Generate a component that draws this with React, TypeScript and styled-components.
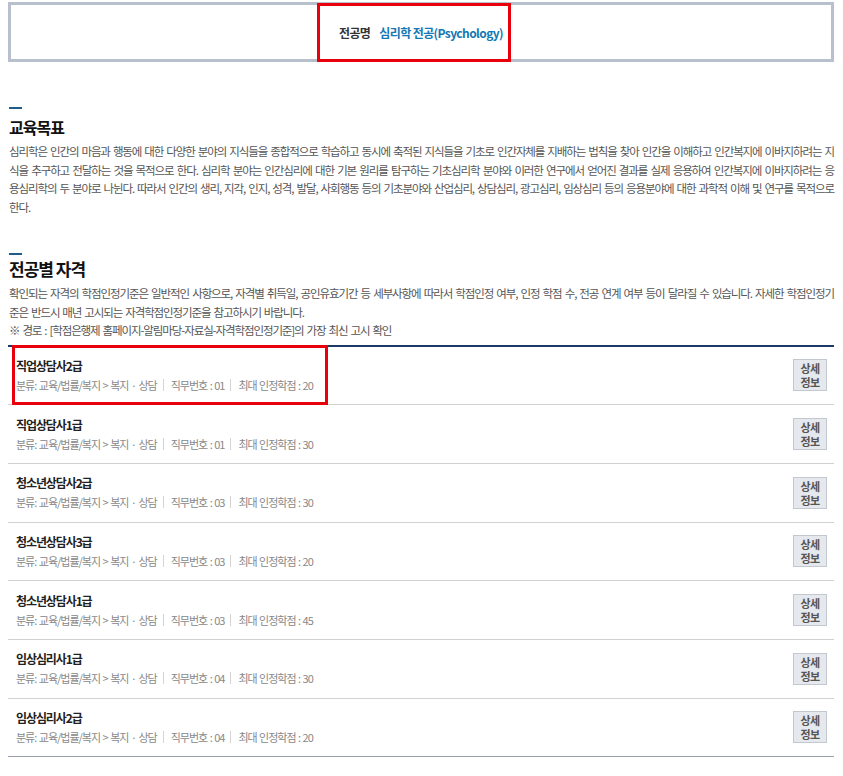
import React from "react";
import styled, { createGlobalStyle } from "styled-components";

const GlobalStyle = createGlobalStyle`
  body {
    margin: 0;
    background: #fff;
    font-family: "Noto Sans CJK KR", "Noto Sans", sans-serif;
  }
`;

const items = [
  { name: "직업상담사2급", no: "01", credit: 20, marked: true },
  { name: "직업상담사1급", no: "01", credit: 30 },
  { name: "청소년상담사2급", no: "03", credit: 30 },
  { name: "청소년상담사3급", no: "03", credit: 20 },
  { name: "청소년상담사1급", no: "03", credit: 45 },
  { name: "임상심리사1급", no: "04", credit: 30 },
  { name: "임상심리사2급", no: "04", credit: 20 },
];

const App = () => {
  return (
    <Page>
      <GlobalStyle />
      <MajorBox>
        <MajorLabel>전공명</MajorLabel>
        <MajorName>심리학 전공(Psychology)</MajorName>
        <Highlight $left={306} $top={-2} $width={194} $height={59} />
      </MajorBox>

      <Section $top={45}>
        <Marker />
        <Heading $gap={7}>교육목표</Heading>
        <Text>
          심리학은 인간의 마음과 행동에 대한 다양한 분야의 지식들을 종합적으로 학습하고 동시에 축적된 지식들을 기초로 인간자체를 지배하는 법칙을 찾아 인간을 이해하고 인간복지에 이바지하려는 지식을 추구하고 전달하는 것을 목적으로 한다. 심리학 분야는 인간심리에 대한 기본 원리를 탐구하는 기초심리학 분야와 이러한 연구에서 얻어진 결과를 실제 응용하여 인간복지에 이바지하려는 응용심리학의 두 분야로 나뉜다. 따라서 인간의 생리, 지각, 인지, 성격, 발달, 사회행동 등의 기초분야와 산업심리, 상담심리, 광고심리, 임상심리 등의 응용분야에 대한 과학적 이해 및 연구를 목적으로 한다.
        </Text>
      </Section>

      <Section $top={37}>
        <Marker />
        <Heading $size={17} $gap={3}>전공별 자격</Heading>
        <Text>
          확인되는 자격의 학점인정기준은 일반적인 사항으로, 자격별 취득일, 공인유효기간 등 세부사항에 따라서 학점인정 여부, 인정 학점 수, 전공 연계 여부 등이 달라질 수 있습니다. 자세한 학점인정기준은 반드시 매년 고시되는 자격학점인정기준을 참고하시기 바랍니다.
          <br />※ 경로 : [학점은행제 홈페이지-알림마당-자료실-자격학점인정기준]의 가장 최신 고시 확인
        </Text>
      </Section>

      <List>
        {items.map((it, i) => (
          <Item key={it.name} $last={i === items.length - 1}>
            <Info>
              <ItemName>{it.name}</ItemName>
              <Meta>
                <span>분류: 교육/법률/복지 &gt; 복지 · 상담</span>
                <Bar />
                <span>직무번호 : {it.no}</span>
                <Bar />
                <span>최대 인정학점 : {it.credit}</span>
              </Meta>
            </Info>
            <DetailButton>
              상세
              <br />
              정보
            </DetailButton>
            {it.marked && <Highlight $left={4} $top={-2} $width={316} $height={60} />}
          </Item>
        ))}
      </List>
    </Page>
  );
};

export default App;

const Page = styled.div`
  padding: 2px 9px 20px 8px;
  color: #555;
`;

const MajorBox = styled.div`
  position: relative;
  height: 54px;
  border: 3px solid #b9c0cd;
  display: flex;
  align-items: center;
  justify-content: center;
  gap: 9px;
  font-size: 12px;
  font-weight: 700;
  letter-spacing: -0.6px;
`;

const MajorLabel = styled.span`
  color: #333;
`;

const MajorName = styled.span`
  color: #1578b4;
`;

const Highlight = styled.div<{ $left: number; $top: number; $width: number; $height: number }>`
  position: absolute;
  left: ${(p) => p.$left}px;
  top: ${(p) => p.$top}px;
  width: ${(p) => p.$width}px;
  height: ${(p) => p.$height}px;
  border: 3px solid #e8000c;
  box-sizing: border-box;
  pointer-events: none;
`;

const Section = styled.section<{ $top: number }>`
  margin-top: ${(p) => p.$top}px;
  padding-left: 1px;
`;

const Marker = styled.div`
  width: 13px;
  height: 2px;
  background: #1d5d8c;
`;

const Heading = styled.h2<{ $size?: number; $gap: number }>`
  margin: ${(p) => p.$gap}px 0 4px;
  font-size: ${(p) => p.$size ?? 16}px;
  line-height: 22px;
  font-weight: 700;
  color: #111;
  letter-spacing: -1px;
`;

const Text = styled.p`
  margin: 0;
  font-size: 11.5px;
  line-height: 18.5px;
  letter-spacing: -1.1px;
  word-spacing: 1.5px;
  word-break: break-all;
  text-align: justify;
  color: #555;
`;

const List = styled.div`
  margin-top: 5px;
  border-top: 2px solid #1b3a68;
`;

const Item = styled.div<{ $last: boolean }>`
  position: relative;
  display: flex;
  align-items: center;
  justify-content: space-between;
  height: 57.7px;
  padding: 0 7px 0 8px;
  border-bottom: 1px solid ${(p) => (p.$last ? "#9aa1ac" : "#d2d2d2")};
`;

const Info = styled.div`
  display: flex;
  flex-direction: column;
  gap: 3px;
`;

const ItemName = styled.div`
  font-size: 12px;
  line-height: 16px;
  font-weight: 700;
  color: #222;
  letter-spacing: -1.1px;
`;

const Meta = styled.div`
  display: flex;
  align-items: center;
  font-size: 11px;
  line-height: 16px;
  color: #888;
  letter-spacing: -1px;
  word-spacing: 1px;
  white-space: pre;
`;

const Bar = styled.span`
  width: 1px;
  height: 12px;
  margin: 0 7px 0 6px;
  background: #d4d4d4;
`;

const DetailButton = styled.div`
  width: 32px;
  height: 30px;
  border: 1px solid #c2c7d0;
  background: #e5e8ed;
  display: flex;
  align-items: center;
  justify-content: center;
  text-align: center;
  font-size: 11px;
  line-height: 14px;
  font-weight: 700;
  color: #555;
  letter-spacing: -0.5px;
`;
